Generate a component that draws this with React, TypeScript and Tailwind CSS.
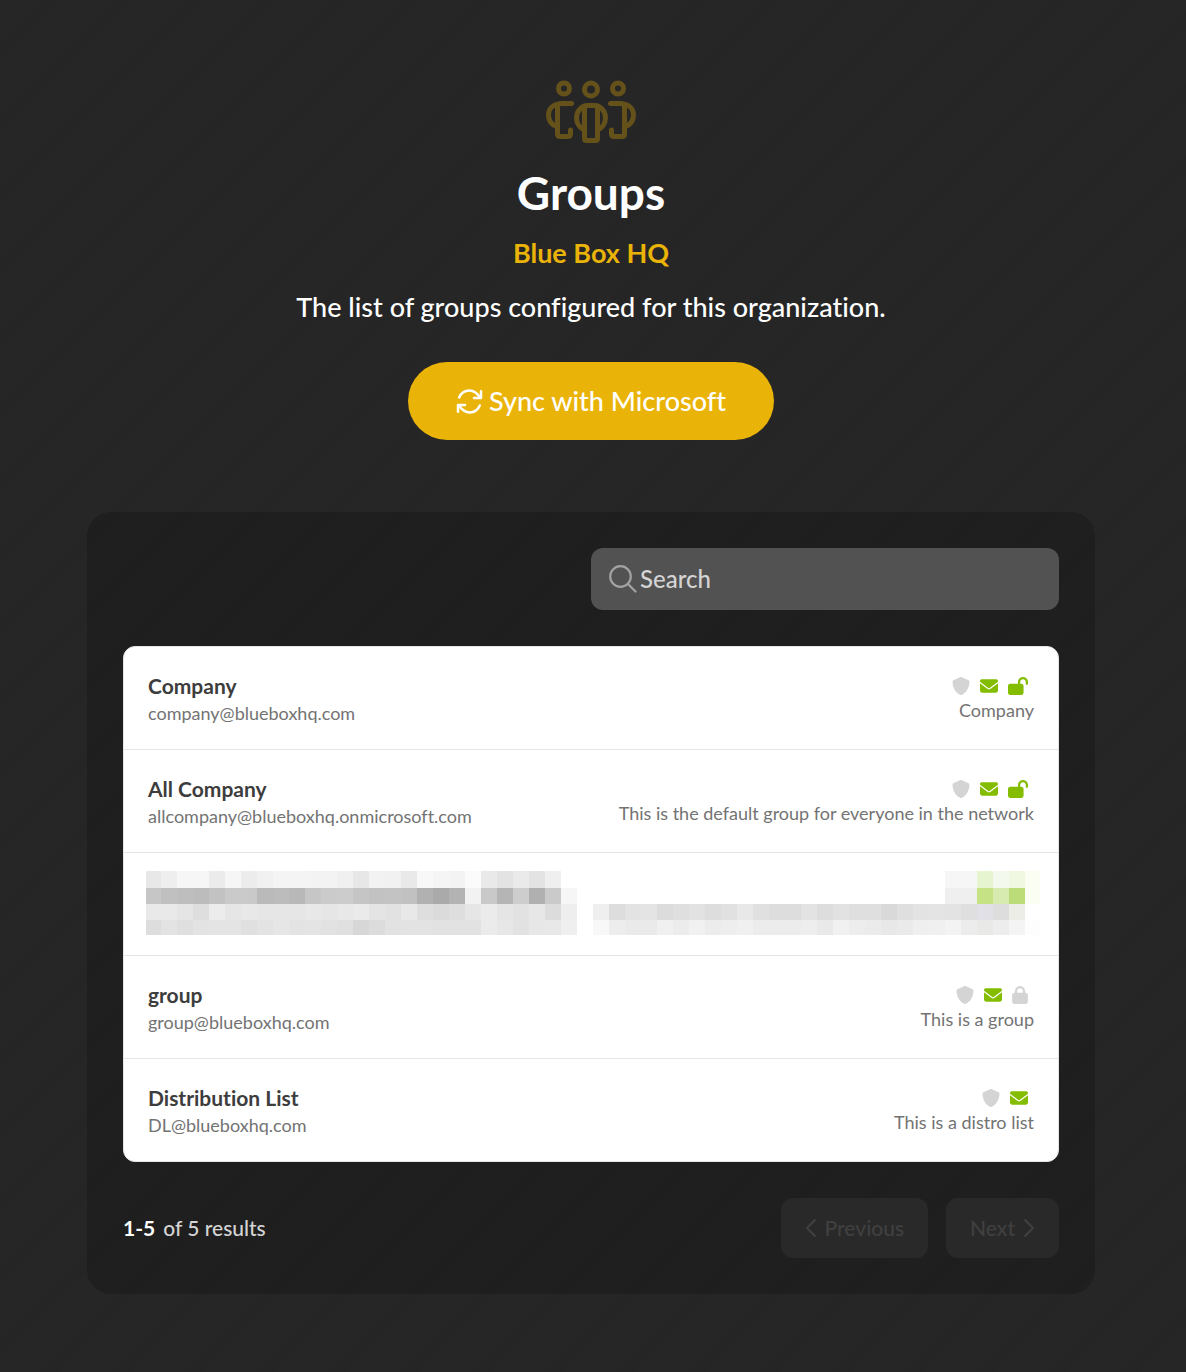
import React, { useState } from 'react';
import { FaEnvelope, FaLock, FaLockOpen, FaShield } from 'react-icons/fa6';

interface Group {
    name: string;
    email: string;
    description: string;
    access?: 'open' | 'locked';
}

const GROUPS: (Group | null)[] = [
    { name: 'Company', email: 'company@blueboxhq.com', description: 'Company', access: 'open' },
    {
        name: 'All Company',
        email: 'allcompany@blueboxhq.onmicrosoft.com',
        description: 'This is the default group for everyone in the network',
        access: 'open',
    },
    null, // redacted
    { name: 'group', email: 'group@blueboxhq.com', description: 'This is a group', access: 'locked' },
    { name: 'Distribution List', email: 'DL@blueboxhq.com', description: 'This is a distro list' },
];

// One colour per 16px cell: two hex digits are a grey, six a full colour, "-" is empty
const REDACTED_LEFT = [
    'e8 ee f6 f6 eb f6 ec f1 f4 f4 f3 f3 f0 e7 f2 f1 e9 f8 f5 f3 fb e9 e3 ea e3 ef -',
    'c6 c0 be bc c2 ca c9 ba bc b8 c6 cb cc c5 c2 c3 c1 b1 aa b3 f2 c9 b5 cd b0 ca f6',
    'e9 e9 e5 de ec e6 e8 e6 e6 e6 e8 e6 e8 ea e4 e2 e8 de db de e6 eb e5 e2 e7 dc ee',
    'dd e3 df e3 e4 e4 e0 e3 e6 e3 e4 e2 e0 d7 dc e2 e3 e3 e2 e2 e2 eb e7 e2 e7 e8 ef',
];
const REDACTED_RIGHT = [
    '- - - - - - - - - - - - - - - - - - - - - - f6 f6 e6f4d0 f4f9ed f0f8e1 fbfef3',
    '- - - - - - - - - - - - - - - - - - - - - - ef ef c5e384 d7ebb0 bbdc78 fbfef3',
    'ef dd e3 e4 dc df e2 dd e1 e8 e0 dd dd e3 dd e2 df df d9 df e3 e4 e3 df e1e0e6 dd ecede6 -',
    'f8 ed ea ea f0 ec f1 ec ee f0 ec ec ec ee e9 f1 ed eb e8 ea ef f0 f3 ec e9e9e7 ed f4 fd',
];

const Mosaic: React.FC<{ rows: string[]; shift: number; width: number }> = ({ rows, shift, width }) => (
    <svg width={width} height={64} shapeRendering="crispEdges" aria-hidden="true">
        {rows.map((row, y) =>
            row.split(' ').map((c, x) =>
                c === '-' ? null : (
                    <rect
                        key={`${x}-${y}`}
                        x={x * 16 - shift}
                        y={y === 0 ? 0 : y * 16 + 1}
                        width={16}
                        height={y === 0 ? 17 : 16}
                        fill={`#${c.length === 2 ? c.repeat(3) : c}`}
                    />
                ),
            ),
        )}
    </svg>
);

const GroupsIcon = () => (
    <svg
        className="h-16 w-[90px] text-[#65511a]"
        viewBox="0 0 90 64"
        fill="none"
        stroke="currentColor"
        strokeWidth="5"
        strokeLinecap="round"
        strokeLinejoin="round"
        aria-hidden="true"
    >
        <circle cx="18" cy="8.5" r="5.5" />
        <circle cx="45" cy="9.5" r="6.5" />
        <circle cx="72" cy="8.5" r="5.5" />
        <path d="M25.500 23.500H17C8 23.500 2.500 28 2.500 35C2.500 41 6 45 11.500 47" />
        <path d="M11.500 25V53.500Q11.500 56.500 14 56.500H22Q24.500 56.500 24.500 54V50" />
        <path d="M64.500 23.500H73C82 23.500 87.500 28 87.500 35C87.500 41 84 45 78.500 47" />
        <path d="M78.500 25V53.500Q78.500 56.500 76 56.500H68Q65.500 56.500 65.500 54V50" />
        <path d="M38.500 50C34 48 30.500 43.500 30.500 38C30.500 30.500 36 25.500 42 25.500H48C54 25.500 59.500 30.500 59.500 38C59.500 43.500 56 48 51.500 50" />
        <path d="M38.500 26V58.500Q38.500 60.500 40.500 60.500H49.500Q51.500 60.500 51.500 58.500V26" />
    </svg>
);

const SyncIcon = () => (
    <svg
        className="size-[27px]"
        viewBox="0 0 27 27"
        fill="none"
        stroke="currentColor"
        strokeWidth="2.5"
        strokeLinecap="round"
        strokeLinejoin="round"
        aria-hidden="true"
    >
        <path d="M3.200 9.500C5 5.200 9 2.600 13.500 2.600C17.500 2.600 20.500 4.500 24 9.200" />
        <path d="M25 3.200V10H18" />
        <path d="M23.800 17.500C22 21.800 18 24.400 13.500 24.400C9.500 24.400 6.500 22.500 3 17.800" />
        <path d="M2 23.800V17H9" />
    </svg>
);

const Chevron: React.FC<{ d: string }> = ({ d }) => (
    <svg
        width="12"
        height="20"
        viewBox="0 0 12 20"
        fill="none"
        stroke="currentColor"
        strokeWidth="2"
        strokeLinecap="round"
        strokeLinejoin="round"
        aria-hidden="true"
    >
        <path d={d} />
    </svg>
);

const GroupRow: React.FC<{ group: Group }> = ({ group }) => (
    <li className="flex justify-between gap-6 p-6">
        <div>
            <p className="text-[21px] leading-[30px] font-bold text-[#3d3d3d]">{group.name}</p>
            <p className="text-lg leading-6 text-[#737373]">{group.email}</p>
        </div>
        <div className="flex flex-col items-end">
            <div className="flex h-[30px] items-center gap-[10px] pr-[6px] text-lg text-[#84bd00]">
                <FaShield className="text-[#d4d4d4]" />
                <FaEnvelope />
                {group.access === 'open' && <FaLockOpen className="h-[18px] w-5" />}
                {group.access === 'locked' && <FaLock className="h-[18px] w-4 text-[#d4d4d4]" />}
            </div>
            <p className="-mt-[3px] text-lg leading-6 text-[#737373]">{group.description}</p>
        </div>
    </li>
);

const GroupsScreen: React.FC = () => {
    const [search, setSearch] = useState('');

    return (
        <main className="min-h-screen bg-[#262626] bg-[linear-gradient(135deg,transparent_31%,#252525_31%,#252525_44%,transparent_44%,transparent_81%,#252525_81%,#252525_94%,transparent_94%)] bg-size-[72px_72px] pt-20 pr-[91px] pb-[78px] pl-[87px] font-[Lato,sans-serif] text-white [font-variant-ligatures:none]">
            <header className="flex flex-col items-center text-center">
                <GroupsIcon />
                <h1 className="mt-5 text-[46px] leading-[58px] font-bold">Groups</h1>
                <h2 className="mt-[10px] text-[27px] leading-[42px] font-bold text-[#eab308]">Blue Box HQ</h2>
                <p className="mt-3 text-[27px] leading-[42px] font-medium">
                    The list of groups configured for this organization.
                </p>
                <button
                    type="button"
                    className="mt-[34px] flex h-[78px] items-center gap-[6px] rounded-full bg-[#eab308] px-12 text-[27px] font-medium"
                >
                    <SyncIcon />
                    Sync with Microsoft
                </button>
            </header>

            <section className="mt-[72px] rounded-3xl bg-black/18 p-9">
                <label className="ml-auto flex h-[62px] w-1/2 items-center gap-[3px] rounded-xl bg-[#525252] px-[18px]">
                    <svg
                        className="size-7 shrink-0 text-[#a3a3a3]"
                        viewBox="0 0 28 28"
                        fill="none"
                        stroke="currentColor"
                        strokeWidth="2.2"
                        strokeLinecap="round"
                        aria-hidden="true"
                    >
                        <circle cx="11.500" cy="11.500" r="10.300" />
                        <path d="M19 19L26.500 26.500" />
                    </svg>
                    <input
                        type="text"
                        aria-label="Search"
                        placeholder="Search"
                        value={search}
                        onChange={(e) => setSearch(e.target.value)}
                        className="min-w-0 flex-1 bg-transparent text-2xl font-medium outline-none placeholder:text-[#d4d4d4]"
                    />
                </label>

                <ul className="mt-9 divide-y divide-[#e5e5e5] rounded-xl border border-[#e5e5e5] bg-white">
                    {GROUPS.map((group, i) =>
                        group ? (
                            <GroupRow key={group.name} group={group} />
                        ) : (
                            <li key={i} className="flex h-[103px] justify-between pt-[18px] pr-[18px] pl-[22px]">
                                <Mosaic rows={REDACTED_LEFT} shift={1} width={431} />
                                <Mosaic rows={REDACTED_RIGHT} shift={0} width={447} />
                            </li>
                        ),
                    )}
                </ul>

                <div className="mt-9 flex items-center justify-between text-[21px]">
                    <p className="font-medium text-[#d4d4d4]">
                        <span className="mr-2 font-bold text-white">1-5</span>
                        of 5 results
                    </p>
                    <div className="flex gap-[18px] font-medium text-[#404040]">
                        <button type="button" disabled className="flex h-[60px] items-center gap-2 rounded-xl bg-[#292929] px-6">
                            <Chevron d="M10 2L2 10L10 18" />
                            Previous
                        </button>
                        <button type="button" disabled className="flex h-[60px] items-center gap-2 rounded-xl bg-[#292929] px-6">
                            Next
                            <Chevron d="M2 2L10 10L2 18" />
                        </button>
                    </div>
                </div>
            </section>
        </main>
    );
};

export default GroupsScreen;
